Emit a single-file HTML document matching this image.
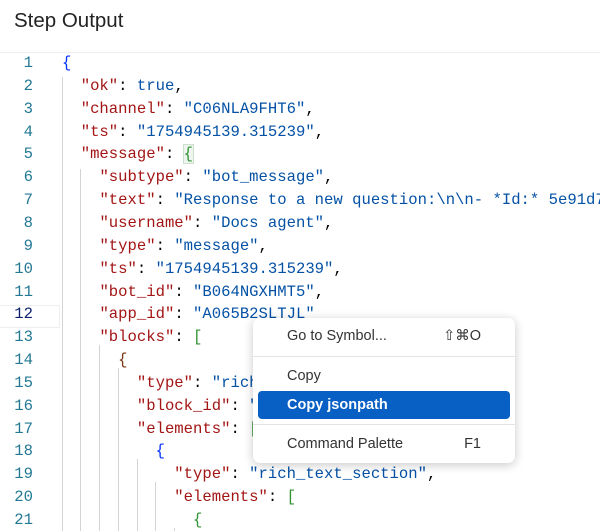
<!DOCTYPE html>
<html><head><style>
html,body{margin:0;width:600px;height:531px;overflow:hidden}
body{background:#fff;font-family:"Liberation Sans",sans-serif;position:relative}
.hdr{position:absolute;left:14px;top:9px;font-size:20.5px;color:#222}
.sep{position:absolute;left:0;top:52px;width:600px;height:1px;background:#eee}
.ln{position:absolute;left:0;width:33px;text-align:right;font:15.6px "Liberation Mono",monospace;color:#237893}
.tx{position:absolute;left:62px;white-space:pre;font:15.6px "Liberation Mono",monospace;color:#000}
.k{color:#a31515}.s{color:#0451a5}.b{color:#0451a5}.g{color:#319331}.p{color:#0431fa}
.guide{position:absolute;width:1px;background:#d3d3d3;bottom:0}
.menu{position:absolute;left:253px;top:318px;width:262px;height:145px;background:#fff;border-radius:7px;box-shadow:0 2px 10px rgba(0,0,0,.22);font-size:14.5px;color:#333}
.mi{position:absolute;left:34px}
.sc{position:absolute;right:34px}
.msep{position:absolute;left:0;width:262px;height:1px;background:#e2e2e2}
</style></head><body>
<div class="hdr">Step Output</div>
<div class="sep"></div>
<div style="position:absolute;left:0;top:305px;width:60px;height:23px;border:1px solid #eee;border-left:none;box-sizing:border-box"></div>
<div class="guide" style="left:62px;top:77px"></div>
<div class="guide" style="left:80px;top:169px"></div>
<div class="guide" style="left:99px;top:345px"></div>
<div class="guide" style="left:118px;top:368px"></div>
<div class="guide" style="left:137px;top:459px"></div>
<div class="guide" style="left:155px;top:482px"></div>
<div class="guide" style="left:174px;top:528px"></div>
<div id="c"></div>
<script>
var L=[
'<span class="p">{</span>',
'  <span class="k">"ok"</span>: <span class="b">true</span>,',
'  <span class="k">"channel"</span>: <span class="s">"C06NLA9FHT6"</span>,',
'  <span class="k">"ts"</span>: <span class="s">"1754945139.315239"</span>,',
'  <span class="k">"message"</span>: <span class="g" style="background:#eef5ee;outline:1px solid #cde0cd">{</span>',
'    <span class="k">"subtype"</span>: <span class="s">"bot_message"</span>,',
'    <span class="k">"text"</span>: <span class="s">"Response to a new question:\\n\\n- *Id:* 5e91d77</span>',
'    <span class="k">"username"</span>: <span class="s">"Docs agent"</span>,',
'    <span class="k">"type"</span>: <span class="s">"message"</span>,',
'    <span class="k">"ts"</span>: <span class="s">"1754945139.315239"</span>,',
'    <span class="k">"bot_id"</span>: <span class="s">"B064NGXHMT5"</span>,',
'    <span class="k">"app_id"</span>: <span class="s">"A065B2SLTJL"</span>',
'    <span class="k">"blocks"</span>: <span class="g">[</span>',
'      <span style="color:#7b3814">{</span>',
'        <span class="k">"type"</span>: <span class="s">"rich_text"</span>,',
'        <span class="k">"block_id"</span>: <span class="s">"xyz"</span>,',
'        <span class="k">"elements"</span>: <span class="g">[</span>',
'          <span class="p">{</span>',
'            <span class="k">"type"</span>: <span class="s">"rich_text_section"</span>,',
'            <span class="k">"elements"</span>: <span class="g">[</span>',
'              <span class="g">{</span>'];
var h='';for(var i=0;i<L.length;i++){var y=54+i*22.85;
h+='<div class="ln" style="top:'+y+'px;color:'+(i==11?'#0b216f':'#237893')+'">'+(i+1)+'</div><div class="tx" style="top:'+y+'px">'+L[i]+'</div>';}
document.getElementById('c').innerHTML=h;
</script>
<div class="menu">
<div class="mi" style="top:10px">Go to Symbol...</div><div class="sc" style="top:10px">⇧⌘O</div>
<div class="msep" style="top:38px"></div>
<div class="mi" style="top:50px">Copy</div>
<div style="position:absolute;left:5px;top:73px;width:252px;height:28px;background:#0860c4;border-radius:4px"></div>
<div class="mi" style="top:79px;color:#fff;font-weight:bold">Copy jsonpath</div>
<div class="msep" style="top:106px"></div>
<div class="mi" style="top:118px">Command Palette</div><div class="sc" style="top:118px">F1</div>
</div>
</body></html>
